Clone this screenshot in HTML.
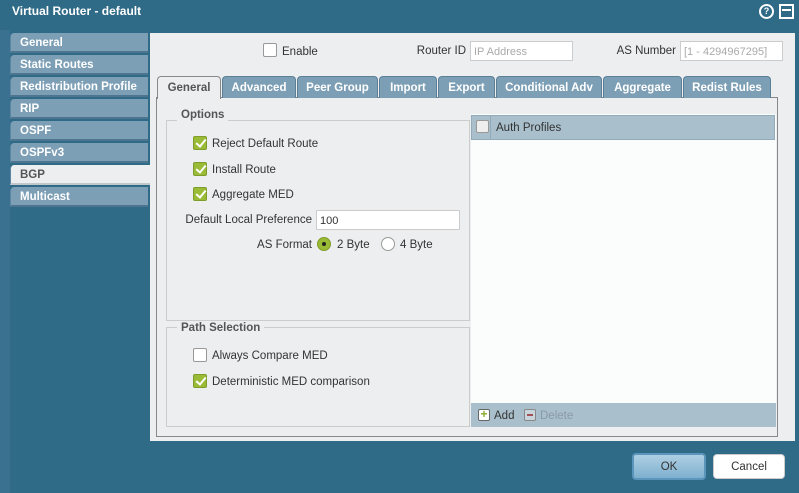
<!DOCTYPE html>
<html><head><meta charset="utf-8"><style>
*{margin:0;padding:0;box-sizing:border-box}
body{width:799px;height:493px;overflow:hidden;background:#2f6a87;font-family:"Liberation Sans",sans-serif;font-size:11.5px;color:#333;position:relative}
.a{position:absolute}
.r{position:absolute;text-align:right}
.title{left:12px;top:3px;color:#fff;font-weight:bold;font-size:12px}
.ltab{position:absolute;left:10px;width:138px;height:20px;background:#7d9fb6;color:#fff;font-weight:bold;font-size:11.5px;padding:4px 0 0 9px;border-radius:4px 0 0 0;border-bottom:2px solid #4d7590;border-left:1px solid #5a86a2}
.main{left:150px;top:33px;width:645px;height:408px;background:#eceeef}
.cb{position:absolute;width:14px;height:14px;border:1px solid #999;border-radius:2px;background:#fff}
.cb.on{background:#9abb35;border-color:#7f9c2c}
.cb.on::after{content:"";position:absolute;left:4px;top:0px;width:4px;height:8px;border:solid #fff;border-width:0 2px 2px 0;transform:rotate(40deg)}
.inp{position:absolute;height:20px;border:1px solid #ccc;background:#fff;padding:4px 3px 0;font-size:11px}
.tab{position:absolute;top:76px;height:22px;background:#7d9fb6;color:#fff;font-weight:bold;font-size:11.5px;text-align:center;padding-top:5px;border-radius:4px 4px 0 0;border:1px solid #5a7f97;border-bottom:none}
.fs{position:absolute;border:1px solid #ccc}
.leg{position:absolute;background:#eceeef;color:#555;font-weight:bold;padding:0 4px}
.btn{position:absolute;height:25px;border-radius:4px;text-align:center;padding-top:6px;font-size:11.5px}
</style></head><body>
<div class="a title" style="top:4px">Virtual Router - default</div>
<div class="a" style="left:759px;top:4px;width:15px;height:15px;border-radius:50%;background:#fff"><div style="position:absolute;left:2px;top:2px;width:11px;height:11px;border-radius:50%;background:#2f6a87;color:#fff;font-size:9px;font-weight:bold;text-align:center;line-height:11px">?</div></div>
<div class="a" style="left:779px;top:4px;width:15px;height:15px;border:2px solid #fff;background:#2f6a87"><div style="margin:3px 1px;height:2px;background:#fff"></div></div>
<div class="a" style="left:0;top:30px;width:10px;height:463px;background:#3a7090"></div>

<div class="ltab" style="top:33px">General</div>
<div class="ltab" style="top:55px">Static Routes</div>
<div class="ltab" style="top:77px">Redistribution Profile</div>
<div class="ltab" style="top:99px">RIP</div>
<div class="ltab" style="top:121px">OSPF</div>
<div class="ltab" style="top:143px">OSPFv3</div>
<div class="ltab" style="top:165px;width:140px;background:#eceeef;color:#555;border-bottom-color:#c0c8cc">BGP</div>
<div class="ltab" style="top:187px">Multicast</div>

<div class="a main"></div>
<div class="cb" style="left:263px;top:43px"></div>
<div class="a" style="left:282px;top:46px">Enable</div>
<div class="r" style="left:366px;width:100px;top:45px">Router ID</div>
<div class="inp" style="left:470px;top:41px;width:103px;color:#aaa">IP Address</div>
<div class="r" style="left:576px;width:100px;top:45px">AS Number</div>
<div class="inp" style="left:680px;top:41px;width:103px;color:#aaa">[1 - 4294967295]</div>

<div class="a" style="left:156px;top:97px;width:622px;height:340px;border:1px solid #888;background:#eceeef"></div>
<div class="tab" style="left:157px;width:64px;background:#eceeef;color:#555;height:23px;border-color:#888">General</div>
<div class="tab" style="left:222px;width:74px">Advanced</div>
<div class="tab" style="left:297px;width:81px">Peer Group</div>
<div class="tab" style="left:379px;width:58px">Import</div>
<div class="tab" style="left:438px;width:57px">Export</div>
<div class="tab" style="left:496px;width:106px">Conditional Adv</div>
<div class="tab" style="left:603px;width:79px">Aggregate</div>
<div class="tab" style="left:683px;width:88px">Redist Rules</div>

<div class="fs" style="left:166px;top:120px;width:304px;height:201px"></div>
<div class="leg" style="left:177px;top:109px">Options</div>
<div class="cb on" style="left:193px;top:136px"></div><div class="a" style="left:212px;top:138px">Reject Default Route</div>
<div class="cb on" style="left:193px;top:162px"></div><div class="a" style="left:212px;top:164px">Install Route</div>
<div class="cb on" style="left:193px;top:187px"></div><div class="a" style="left:212px;top:189px">Aggregate MED</div>
<div class="r" style="left:150px;width:162px;top:214px">Default Local Preference</div>
<div class="inp" style="left:316px;top:210px;width:144px;height:20px">100</div>
<div class="r" style="left:200px;width:112px;top:239px">AS Format</div>
<div class="a" style="left:317px;top:237px;width:14px;height:14px;border-radius:50%;background:#9abb35;border:1px solid #7f9c2c"><div style="margin:4px;width:4px;height:4px;border-radius:50%;background:#222"></div></div>
<div class="a" style="left:337px;top:239px">2 Byte</div>
<div class="a" style="left:381px;top:237px;width:14px;height:14px;border-radius:50%;background:#fff;border:1px solid #999"></div>
<div class="a" style="left:400px;top:239px">4 Byte</div>

<div class="fs" style="left:166px;top:327px;width:304px;height:100px"></div>
<div class="leg" style="left:177px;top:322px">Path Selection</div>
<div class="cb" style="left:193px;top:348px"></div><div class="a" style="left:212px;top:350px">Always Compare MED</div>
<div class="cb on" style="left:193px;top:374px"></div><div class="a" style="left:212px;top:376px">Deterministic MED comparison</div>

<div class="a" style="left:471px;top:114px;width:305px;height:313px;background:#fbfcfc"></div>
<div class="a" style="left:471px;top:115px;width:304px;height:25px;background:#a9bfcc;border:1px solid #93aabb"></div>
<div class="cb" style="left:476px;top:120px;width:13px;height:13px;background:#eee"></div>
<div class="a" style="left:490px;top:115px;width:1px;height:25px;background:#93aabb"></div>
<div class="a" style="left:496px;top:122px">Auth Profiles</div>
<div class="a" style="left:471px;top:403px;width:305px;height:24px;background:#a9bfcc"></div>
<div class="a" style="left:478px;top:409px;width:12px;height:12px;border:1px solid #666;border-radius:2px;background:#fff;color:#8aab2a;font-weight:bold;font-size:12px;line-height:9px;text-align:center">+</div>
<div class="a" style="left:494px;top:410px">Add</div>
<div class="a" style="left:524px;top:409px;width:12px;height:12px;border:1px solid #888;border-radius:2px;background:#c8d5dd"><div style="margin:4px 2px;height:2px;background:#a05050"></div></div>
<div class="a" style="left:540px;top:410px;color:#8a9aa6">Delete</div>

<div class="btn" style="left:632px;top:453px;width:74px;height:27px;background:linear-gradient(#aecfe3,#7fb0cf);border:2px solid #5b95bb;color:#333">OK</div>
<div class="btn" style="left:713px;top:454px;width:72px;background:#fff;border:1px solid #ccc;color:#333">Cancel</div>
</body></html>
